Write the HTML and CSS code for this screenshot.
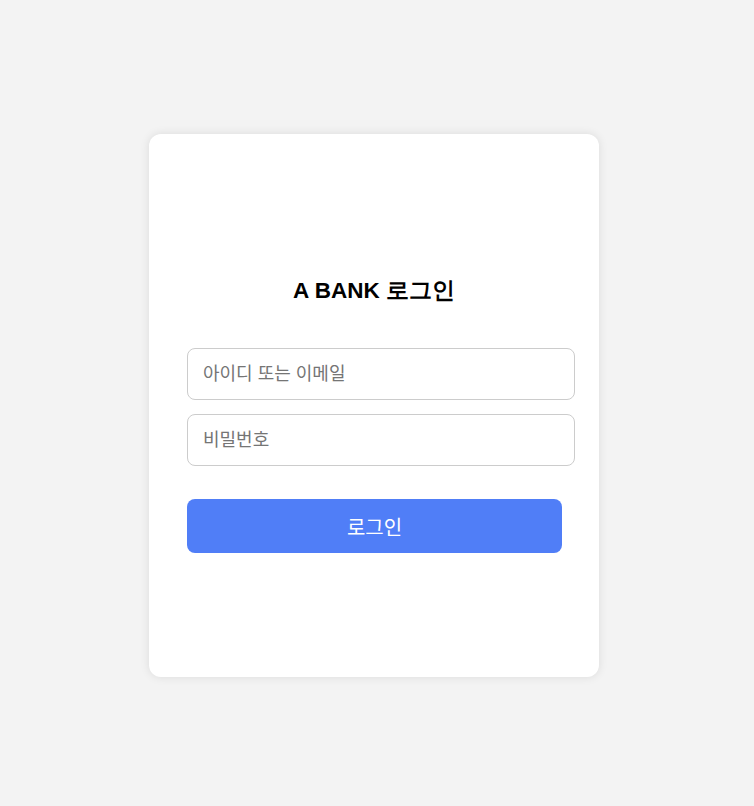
FILE: index.html
```html
<!DOCTYPE html>
<html lang="ko">
<head>
<meta charset="utf-8">
<title>A BANK 로그인</title>
<link rel="stylesheet" href="styles.css">
</head>
<body>
  <main class="page">
    <div class="card">
      <h1 class="title">A BANK 로그인</h1>
      <form class="form">
        <input class="field" type="text" placeholder="아이디 또는 이메일">
        <input class="field" type="password" placeholder="비밀번호">
        <button class="btn" type="button">로그인</button>
      </form>
    </div>
  </main>
</body>
</html>
```

FILE: styles.css
```css
html, body {
  margin: 0;
  padding: 0;
  background: #f3f3f3;
  font-family: Arial, sans-serif;
}

.page {
  min-height: 806px;
  box-sizing: border-box;
  padding: 5px 6px 0 0;
  display: flex;
  align-items: center;
  justify-content: center;
}

.card {
  width: 450px;
  height: 543px;
  box-sizing: border-box;
  padding: 144px 38px 0 38px;
  background: #ffffff;
  border-radius: 12px;
  box-shadow: 0 0 10px rgba(0, 0, 0, 0.1);
}

.title {
  margin: 0;
  font-family: Arial, sans-serif;
  font-size: 22.5px;
  line-height: 26px;
  font-weight: bold;
  text-align: center;
  color: #000;
}

.form {
  margin-top: 44px;
  display: flex;
  flex-direction: column;
  align-items: flex-start;
}

.field {
  width: 388px;
  height: 52px;
  box-sizing: border-box;
  padding: 0 15px;
  border: 1px solid #cccccc;
  border-radius: 8px;
  font-family: "Liberation Sans", "Noto Sans CJK KR", sans-serif;
  font-size: 18px;
  color: #333;
  background: #fff;
  outline: none;
}

.field + .field {
  margin-top: 14px;
}

.field::placeholder {
  color: #757575;
}

.btn {
  margin-top: 33px;
  width: 375px;
  height: 54px;
  border: none;
  border-radius: 8px;
  background: #507ef7;
  color: #ffffff;
  font-family: "Liberation Sans", "Noto Sans CJK KR", sans-serif;
  font-size: 20px;
  cursor: pointer;
}
```
